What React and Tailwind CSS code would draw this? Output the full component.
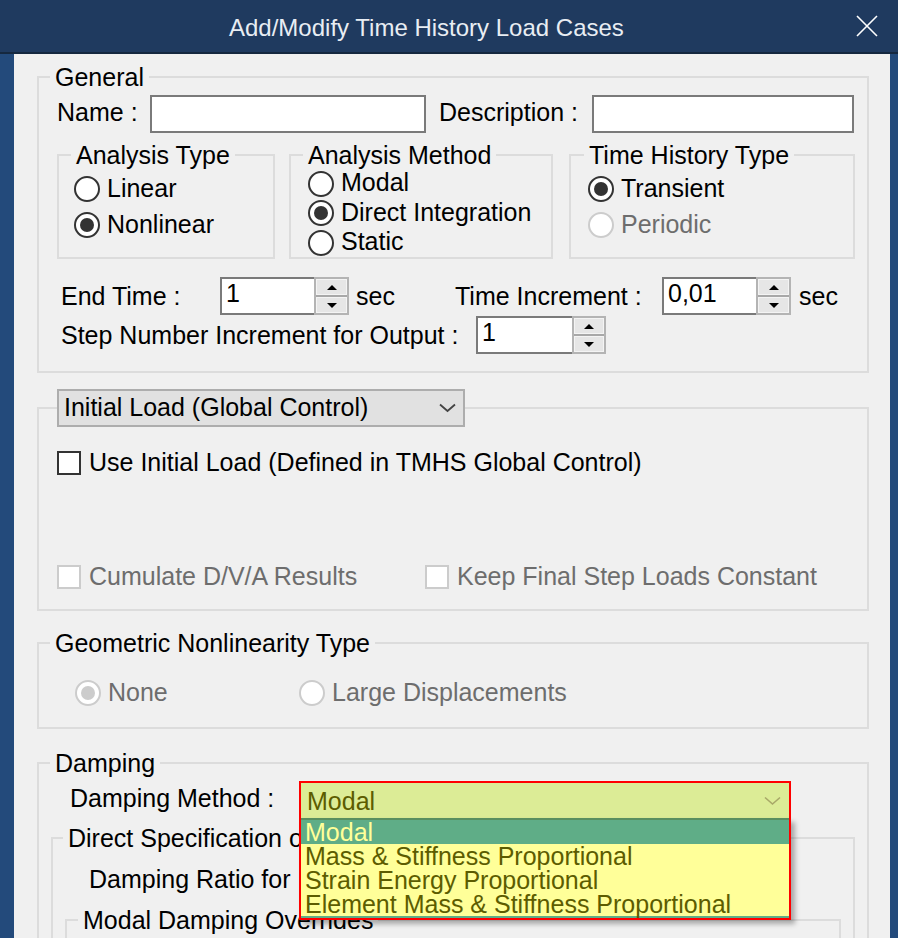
import React from "react";

const FS = "border-2 border-[#dcdcdc] min-w-0";
const LG = "px-[5px] leading-[28px]";

function Radio({ checked, disabled, label, h = "h-[30px]" }) {
  return (
    <div className={`flex items-center ${h}`}>
      <span
        className={`w-[26px] h-[26px] shrink-0 rounded-full border-2 bg-white flex items-center justify-center ${
          disabled ? "border-[#cccccc]" : "border-[#333333]"
        }`}
      >
        {checked && (
          <span
            className={`w-[14px] h-[14px] rounded-full ${
              disabled ? "bg-[#cccccc]" : "bg-[#333333]"
            }`}
          />
        )}
      </span>
      <span className={`ml-[7px] pb-[3px] whitespace-nowrap ${disabled ? "text-[#6d6d6d]" : "text-black"}`}>
        {label}
      </span>
    </div>
  );
}

function Check({ disabled, label }) {
  return (
    <div className="flex items-center">
      <span
        className={`w-[24px] h-[24px] shrink-0 border-2 bg-white ${
          disabled ? "border-[#cccccc]" : "border-[#333333]"
        }`}
      />
      <span className={`ml-[8px] pb-[3px] whitespace-nowrap ${disabled ? "text-[#6d6d6d]" : "text-black"}`}>
        {label}
      </span>
    </div>
  );
}

function Spin({ value, inputW, spinW }) {
  return (
    <div className="flex h-[38px] shrink-0">
      <div className={`${inputW} h-full bg-white border-2 border-r-0 border-[#7a7a7a] pl-[4px] leading-[28px]`}>
        {value}
      </div>
      <div className={`${spinW} h-full border-2 border-[#b4b4b4] flex flex-col bg-[#e6e6e6]`}>
        <div className="flex-1 flex items-center justify-center border border-[#f4f4f4]">
          <span className="w-0 h-0 border-x-[5px] border-x-transparent border-b-[5px] border-b-black" />
        </div>
        <div className="h-[2px] bg-[#a8a8a8]" />
        <div className="flex-1 flex items-center justify-center border border-[#f4f4f4]">
          <span className="w-0 h-0 border-x-[5px] border-x-transparent border-t-[5px] border-t-black" />
        </div>
      </div>
    </div>
  );
}

export default function App() {
  return (
    <div className="w-[898px] h-[938px] overflow-hidden flex flex-col font-['Liberation_Sans',Arial,sans-serif] text-[25px] leading-[28px] text-black">
      {/* Title bar */}
      <div className="h-[54px] shrink-0 bg-[#1f3a5f] border-b-2 border-[#15283f] flex items-center">
        <span className="pl-[229px] pt-[4px] text-[24px] text-[#e8edf3] whitespace-nowrap">
          Add/Modify Time History Load Cases
        </span>
        <svg className="ml-auto mr-[20px]" width="22" height="22" viewBox="0 0 22 22">
          <path d="M1 1 L21 21 M21 1 L1 21" stroke="#ffffff" strokeWidth="1.6" fill="none" />
        </svg>
      </div>

      <div className="flex flex-1 min-h-0">
        <div className="w-[14px] shrink-0 bg-[#234a7b]" />
        <div className="flex-1 bg-[#f0f0f0] pl-[23px] pr-[21px]">
          {/* General */}
          <fieldset className={`mt-[9px] pb-[17px] ${FS}`}>
            <legend className={`ml-[11px] ${LG}`}>General</legend>
            <div className="mt-[4px] flex items-center pl-[18px]">
              <span className="w-[93px] pb-[4px] whitespace-nowrap">Name :</span>
              <div className="w-[276px] h-[38px] bg-white border-2 border-[#7a7a7a]" />
              <span className="ml-[13px] w-[153px] pb-[4px] whitespace-nowrap">Description :</span>
              <div className="w-[262px] h-[38px] bg-white border-2 border-[#7a7a7a]" />
            </div>

            <div className="mt-[8px] flex pl-[18px]">
              <fieldset className={`w-[218px] pb-[14px] ${FS}`}>
                <legend className={`ml-[12px] ${LG}`}>Analysis Type</legend>
                <div className="mt-[2px] pl-[15px]">
                  <Radio h="h-[36px]" label="Linear" />
                  <Radio h="h-[36px]" checked label="Nonlinear" />
                </div>
              </fieldset>
              <fieldset className={`ml-[14px] w-[264px] ${FS}`}>
                <legend className={`ml-[12px] ${LG}`}>Analysis Method</legend>
                <div className="pl-[17px]">
                  <Radio h="h-[29px]" label="Modal" />
                  <Radio h="h-[30px]" checked label="Direct Integration" />
                  <Radio h="h-[29px]" label="Static" />
                </div>
              </fieldset>
              <fieldset className={`ml-[16px] w-[286px] pb-[14px] ${FS}`}>
                <legend className={`ml-[13px] ${LG}`}>Time History Type</legend>
                <div className="mt-[2px] pl-[17px]">
                  <Radio h="h-[36px]" checked label="Transient" />
                  <Radio h="h-[36px]" disabled label="Periodic" />
                </div>
              </fieldset>
            </div>

            <div className="mt-[18px] flex items-center pl-[22px]">
              <span className="w-[159px] whitespace-nowrap">End Time :</span>
              <Spin value="1" inputW="w-[94px]" spinW="w-[35px]" />
              <span className="ml-[7px] w-[99px]">sec</span>
              <span className="w-[207px] whitespace-nowrap">Time Increment :</span>
              <Spin value="0,01" inputW="w-[94px]" spinW="w-[35px]" />
              <span className="ml-[8px]">sec</span>
            </div>
            <div className="mt-[1px] flex items-center pl-[22px]">
              <span className="w-[415px] whitespace-nowrap">Step Number Increment for Output :</span>
              <Spin value="1" inputW="w-[96px]" spinW="w-[34px]" />
            </div>
          </fieldset>

          {/* Initial Load */}
          <fieldset className={`mt-[16px] pb-[18px] ${FS}`}>
            <legend className="ml-[18px]">
              <div className="w-[408px] h-[38px] bg-[#e1e1e1] border-2 border-[#adadad] flex items-center justify-between pl-[5px] pr-[7px]">
                <span className="pb-[2px] whitespace-nowrap">Initial Load (Global Control)</span>
                <svg width="17" height="10" viewBox="0 0 17 10">
                  <polyline points="1,1.5 8.5,8 16,1.5" fill="none" stroke="#444444" strokeWidth="1.8" />
                </svg>
              </div>
            </legend>
            <div className="mt-[22px] pl-[18px] h-[28px] flex items-center">
              <Check label="Use Initial Load (Defined in TMHS Global Control)" />
            </div>
            <div className="mt-[86px] pl-[18px] h-[28px] flex items-center">
              <div className="w-[368px]">
                <Check disabled label="Cumulate D/V/A Results" />
              </div>
              <Check disabled label="Keep Final Step Loads Constant" />
            </div>
          </fieldset>

          {/* Geometric Nonlinearity */}
          <fieldset className={`mt-[18px] pb-[19px] ${FS}`}>
            <legend className={`ml-[11px] ${LG}`}>Geometric Nonlinearity Type</legend>
            <div className="mt-[21px] pl-[36px] flex items-center">
              <div className="w-[224px]">
                <Radio checked disabled label="None" />
              </div>
              <Radio disabled label="Large Displacements" />
            </div>
          </fieldset>

          {/* Damping */}
          <fieldset className={`mt-[20px] ${FS}`}>
            <legend className={`ml-[11px] ${LG}`}>Damping</legend>
            <div className="mt-[4px] pl-[31px] flex items-center">
              <span className="w-[229px] pb-[4px] whitespace-nowrap">Damping Method :</span>
              <div className="relative w-[492px] h-[37px]">
                <div className="h-[37px] border-2 border-b-0 border-[#ff0000] bg-[#dcec96] flex items-center justify-between pl-[6px] pr-[8px] text-[#5c5c00]">
                  <span>Modal</span>
                  <svg width="17" height="10" viewBox="0 0 17 10">
                    <polyline points="1,1.5 8.5,8 16,1.5" fill="none" stroke="#a8a868" strokeWidth="1.6" />
                  </svg>
                </div>
                <div className="absolute left-0 top-[37px] z-10 w-[492px] border-2 border-t-0 border-[#ff0000] bg-[#ffff99] shadow-[4px_4px_5px_rgba(0,0,0,0.3)]">
                  <div className="h-[2px] bg-[#5a8f5f]" />
                  <div className="h-[24px] leading-[24px] pl-[4px] bg-[#5fad87] text-[#ffff99] whitespace-nowrap">Modal</div>
                  <div className="h-[24px] leading-[24px] pl-[4px] text-[#5c5c00] whitespace-nowrap">Mass &amp; Stiffness Proportional</div>
                  <div className="h-[24px] leading-[24px] pl-[4px] text-[#5c5c00] whitespace-nowrap">Strain Energy Proportional</div>
                  <div className="h-[24px] leading-[24px] pl-[4px] text-[#5c5c00] whitespace-nowrap">Element Mass &amp; Stiffness Proportional</div>
                  <div className="h-[2px] bg-[#5fad87]" />
                </div>
              </div>
            </div>
            <fieldset className={`mt-[6px] mx-[12px] ${FS}`}>
              <legend className={`ml-[10px] ${LG}`}>Direct Specification of Damping</legend>
              <div className="mt-[13px] pl-[36px] h-[28px] flex items-center whitespace-nowrap">
                <span>Damping Ratio for</span>
              </div>
              <fieldset className={`mt-[13px] mx-[12px] ${FS}`}>
                <legend className={`ml-[11px] ${LG}`}>Modal Damping Overrides</legend>
                <div className="h-[100px]" />
              </fieldset>
            </fieldset>
          </fieldset>
        </div>
        <div className="w-[8px] shrink-0 bg-[#234a7b]" />
      </div>
    </div>
  );
}
